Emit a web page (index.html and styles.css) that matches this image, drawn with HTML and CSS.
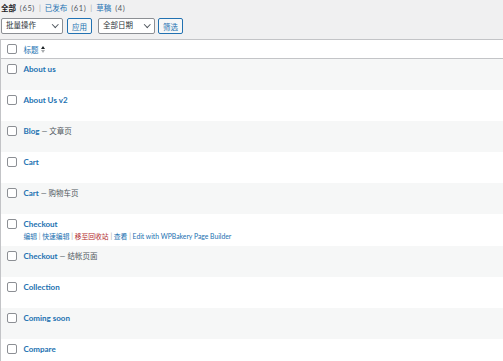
FILE: index.html
```html
<!DOCTYPE html>
<html lang="zh-CN">
    <head>
        <meta charset="UTF-8">
        <title>页面</title>
        <link rel="stylesheet" href="styles.css">
    </head>
    <body>
        <ul class="subsubsub">
            <li class="current">全部 <span class="count">(65)</span></li>
            <li class="sep">|</li>
            <li><a href="#">已发布</a> <span class="count">(61)</span></li>
            <li class="sep">|</li>
            <li><a href="#">草稿</a> <span class="count">(4)</span></li>
        </ul>

        <div class="tablenav">
            <div class="select">批量操作<span class="caret"></span></div>
            <button class="button">应用</button>
            <div class="select date">全部日期<span class="caret"></span></div>
            <button class="button">筛选</button>
        </div>

        <table class="list">
            <thead>
                <tr>
                    <td class="cb"><span class="check"></span></td>
                    <th>
                        <a href="#">标题</a>
                        <span class="sort"><span class="up"></span><span class="down"></span></span>
                    </th>
                </tr>
            </thead>
            <tbody>
                <tr><td class="cb"><span class="check"></span></td><td><a class="title" href="#">About us</a></td></tr>
                <tr><td class="cb"><span class="check"></span></td><td><a class="title" href="#">About Us v2</a></td></tr>
                <tr><td class="cb"><span class="check"></span></td><td><a class="title" href="#">Blog</a><span class="state"> — 文章页</span></td></tr>
                <tr><td class="cb"><span class="check"></span></td><td><a class="title" href="#">Cart</a></td></tr>
                <tr><td class="cb"><span class="check"></span></td><td><a class="title" href="#">Cart</a><span class="state"> — 购物车页</span></td></tr>
                <tr>
                    <td class="cb"><span class="check"></span></td>
                    <td>
                        <a class="title" href="#">Checkout</a>
                        <div class="row-actions">
                            <a href="#">编辑</a> | <a href="#">快速编辑</a> | <a class="trash" href="#">移至回收站</a> | <a href="#">查看</a> | <a href="#">Edit with WPBakery Page Builder</a>
                        </div>
                    </td>
                </tr>
                <tr><td class="cb"><span class="check"></span></td><td><a class="title" href="#">Checkout</a><span class="state"> — 结帐页面</span></td></tr>
                <tr><td class="cb"><span class="check"></span></td><td><a class="title" href="#">Collection</a></td></tr>
                <tr><td class="cb"><span class="check"></span></td><td><a class="title" href="#">Coming soon</a></td></tr>
                <tr><td class="cb"><span class="check"></span></td><td><a class="title" href="#">Compare</a></td></tr>
            </tbody>
        </table>
    </body>
</html>
```

FILE: styles.css
```css
body {
    margin: 0;
    background-color: #f0f0f1;
    color: #3c434a;
    font-family: Lato, "Noto Sans CJK SC", sans-serif;
    font-size: 8px;
}

a {
    color: #2271b1;
    text-decoration: none;
}

.subsubsub {
    list-style: none;
    margin: 0;
    padding: 3px 0 0 1px;
    height: 15px;
    box-sizing: border-box;
    display: flex;
    gap: 4px;
    color: #646970;
    font-size: 7.5px;
    line-height: 12px;
}

.subsubsub .current {
    color: #1d2327;
    font-weight: 700;
}

.subsubsub .sep {
    color: #a7aaad;
}

.count {
    color: #50575e;
    font-weight: 400;
    letter-spacing: 0.6px;
    margin-left: 2px;
}

.tablenav {
    display: flex;
    align-items: center;
    padding: 0 0 0 1px;
    height: 16px;
    margin-top: 3px;
}

.select {
    box-sizing: border-box;
    width: 62px;
    height: 16px;
    background: #fff;
    border: 1px solid #8c8f94;
    border-radius: 2px;
    padding: 0 0 0 4px;
    line-height: 14px;
    color: #2c3338;
    font-size: 7.5px;
    position: relative;
    margin-right: 4px;
}

.select.date {
    width: 57px;
    margin-left: 6px;
    margin-right: 3px;
}

.caret {
    position: absolute;
    right: 5px;
    top: 3px;
    width: 3.5px;
    height: 3.5px;
    border-right: 1px solid #50575e;
    border-bottom: 1px solid #50575e;
    transform: rotate(45deg);
}

.button {
    box-sizing: border-box;
    height: 16px;
    width: 25px;
    padding: 0;
    border: 1px solid #2271b1;
    border-radius: 2px;
    background: #f6f7f7;
    color: #2271b1;
    font-family: inherit;
    font-size: 7.5px;
}

.list {
    margin-top: 5px;
    width: 100%;
    border-collapse: collapse;
    background: #fff;
    border-top: 1px solid #c3c4c7;
    border-left: 1px solid #c3c4c7;
}

.list thead td,
.list thead th {
    height: 18px;
    border-bottom: 1px solid #c3c4c7;
    text-align: left;
    font-weight: 400;
    font-size: 7.5px;
    padding: 0;
    vertical-align: middle;
}

.list .cb {
    width: 23px;
    padding: 0 0 0 6px;
    box-sizing: border-box;
}

.check {
    display: block;
    box-sizing: border-box;
    width: 10px;
    height: 10px;
    border: 1px solid #8c8f94;
    border-radius: 2px;
    background: #fff;
}

.sort {
    display: inline-flex;
    flex-direction: column;
    gap: 1px;
    vertical-align: middle;
    margin-left: 1px;
    position: relative;
    top: -1px;
}

.sort .up,
.sort .down {
    width: 0;
    height: 0;
    border-left: 2.5px solid transparent;
    border-right: 2.5px solid transparent;
}

.sort .up {
    border-bottom: 3px solid #1d2327;
}

.sort .down {
    border-top: 3px solid #a7aaad;
}

.list tbody tr {
    height: 31.2px;
}

.list tbody tr:nth-child(odd) {
    background: #f6f7f7;
}

.list tbody td {
    padding: 5px 0 0 0;
    vertical-align: top;
    line-height: 11px;
}

.list tbody .cb {
    padding: 5px 0 0 6px;
}

.title {
    font-weight: 700;
    font-size: 8px;
}

.state {
    color: #50575e;
    font-size: 7.5px;
}

.row-actions {
    margin-top: 1px;
    color: #a7aaad;
    font-size: 6.8px;
    line-height: 10px;
}

.row-actions .trash {
    color: #b32d2e;
}
```
